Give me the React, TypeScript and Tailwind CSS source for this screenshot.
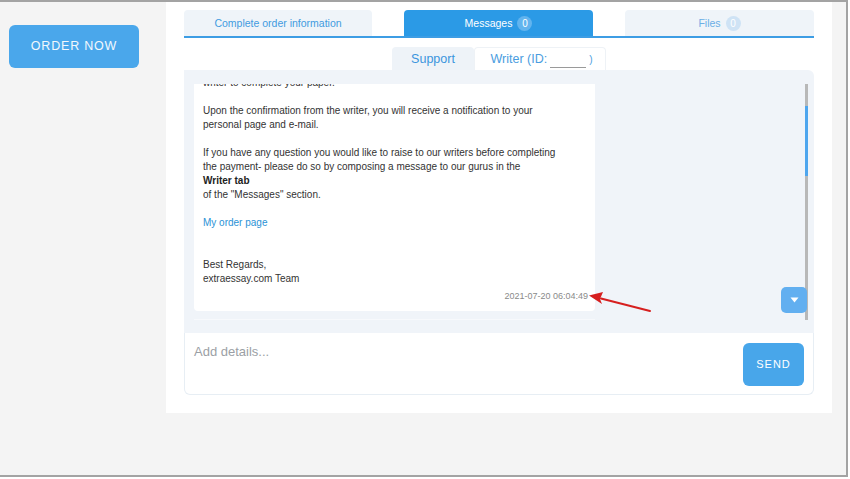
import React from "react";

const Line = ({ children, className = "" }: { children?: React.ReactNode; className?: string }) => (
  <div className={`h-[14px] leading-[14px] whitespace-nowrap ${className}`}>{children ?? "\u00a0"}</div>
);

export default function App() {
  return (
    <div className="relative w-[850px] h-[479px] bg-white font-['Liberation_Sans',Arial,sans-serif]">
      <div className="w-[848px] h-[477px] bg-[#f4f4f4] border-t-2 border-r-2 border-b-2 border-[#a3a3a3] flex">
        {/* left column */}
        <div className="w-[166px] pl-[9px] pt-[23px]">
          <button className="w-[130px] h-[43px] rounded-[6px] bg-[#4aa7eb] text-[#f2f8fd] text-[12.5px] tracking-[0.8px]">
            ORDER NOW
          </button>
        </div>

        {/* main panel */}
        <div className="w-[666px] h-[411px] bg-white px-[18px] pt-[8px] flex flex-col">
          {/* tabs */}
          <div className="flex justify-between h-[26px]">
            <div className="w-[188px] rounded-t-[4px] bg-[#eff4f9] flex items-center justify-center pt-[1px] text-[10.5px] text-[#3f9be0]">
              Complete order information
            </div>
            <div className="w-[189px] rounded-t-[4px] bg-[#2b9ae6] flex items-center justify-center gap-[5px] pt-[1px] text-[10.5px] text-white">
              Messages
              <span className="w-[15px] h-[15px] rounded-full bg-[#62b4ee] flex items-center justify-center text-[10px] text-white">0</span>
            </div>
            <div className="w-[189px] rounded-t-[4px] bg-[#eff4f9] flex items-center justify-center gap-[5px] pt-[1px] text-[10.5px] text-[#6aaee6]">
              Files
              <span className="w-[15px] h-[15px] rounded-full bg-[#cfe3f5] flex items-center justify-center text-[10px] text-white">0</span>
            </div>
          </div>
          <div className="h-[2px] bg-[#3d9de4]" />

          {/* sub tabs */}
          <div className="mt-[9px] flex justify-center h-[23px]">
            <div className="w-[82px] rounded-t-[4px] bg-[#eef3f8] flex items-center justify-center pt-[1px] text-[12.5px] text-[#3b95dd]">
              Support
            </div>
            <div className="w-[132px] rounded-t-[4px] bg-white border border-b-0 border-[#eef2f6] flex items-center justify-center gap-[3px] pt-[1px] pl-[3px] text-[12.5px] text-[#4a9de0]">
              <span>Writer (ID:</span>
              <span className="w-[36px] h-[17px] border-b border-[#9a9a9a]" />
              <span className="text-[10px]">)</span>
            </div>
          </div>

          {/* messages area */}
          <div className="relative h-[263px] bg-[#f0f4f9] rounded-tr-[6px] pt-[14px] pl-[10px]">
            <div className="h-[236px] w-[401px] overflow-hidden flex flex-col justify-end pb-[8px] border-b border-[#f7f9fc]">
              <div className="bg-white rounded-[4px] pl-[9px] pr-[7px] pb-[8px] text-[10px] text-[#333]">
                <Line>Our support team will now find the most suitable</Line>
                <Line>writer to complete your paper.</Line>
                <Line />
                <Line>Upon the confirmation from the writer, you will receive a notification to your</Line>
                <Line>personal page and e-mail.</Line>
                <Line />
                <Line>If you have any question you would like to raise to our writers before completing</Line>
                <Line>the payment- please do so by composing a message to our gurus in the</Line>
                <Line className="font-bold text-[#222]">Writer tab</Line>
                <Line>of the "Messages" section.</Line>
                <Line />
                <Line className="text-[#2a92d6]">My order page</Line>
                <Line />
                <Line />
                <Line>Best Regards,</Line>
                <Line>extraessay.com Team</Line>
                <div className="h-[14px] mt-[3px] leading-[14px] text-right text-[9px] text-[#8a8a8a]">2021-07-20 06:04:49</div>
              </div>
            </div>

            {/* scrollbar */}
            <div className="absolute left-[621px] top-[14px] w-[3px] h-[236px] bg-[#b8b8b8]">
              <div className="mt-[22px] h-[70px] bg-[#4ea6ee]" />
            </div>
            {/* scroll down button */}
            <div className="absolute left-[597px] top-[217px] w-[26px] h-[26px] rounded-[5px] bg-[#62aff0] flex items-center justify-center">
              <svg width="9" height="6" viewBox="0 0 9 6">
                <path d="M0.5 0.5 H8.5 L4.5 5.5 Z" fill="white" />
              </svg>
            </div>
          </div>

          {/* input area */}
          <div className="h-[62px] border border-t-0 border-[#e7eef4] rounded-b-[6px] flex justify-between">
            <div className="pl-[9px] pt-[9px] text-[13px] text-[#9b9fa5]">Add details...</div>
            <button className="mt-[10px] mr-[9px] w-[61px] h-[43px] rounded-[6px] bg-[#48a6ea] text-white text-[11px] tracking-[1px]">
              SEND
            </button>
          </div>
        </div>
      </div>

      {/* red annotation arrow */}
      <svg className="absolute left-0 top-0 pointer-events-none" width="850" height="479">
        <path d="M650 311 L601 298.5" stroke="#d61f1f" strokeWidth="2" strokeLinecap="round" />
        <path d="M589 295.5 L603 292 L600 299 L602 304 Z" fill="#d61f1f" />
      </svg>
    </div>
  );
}
